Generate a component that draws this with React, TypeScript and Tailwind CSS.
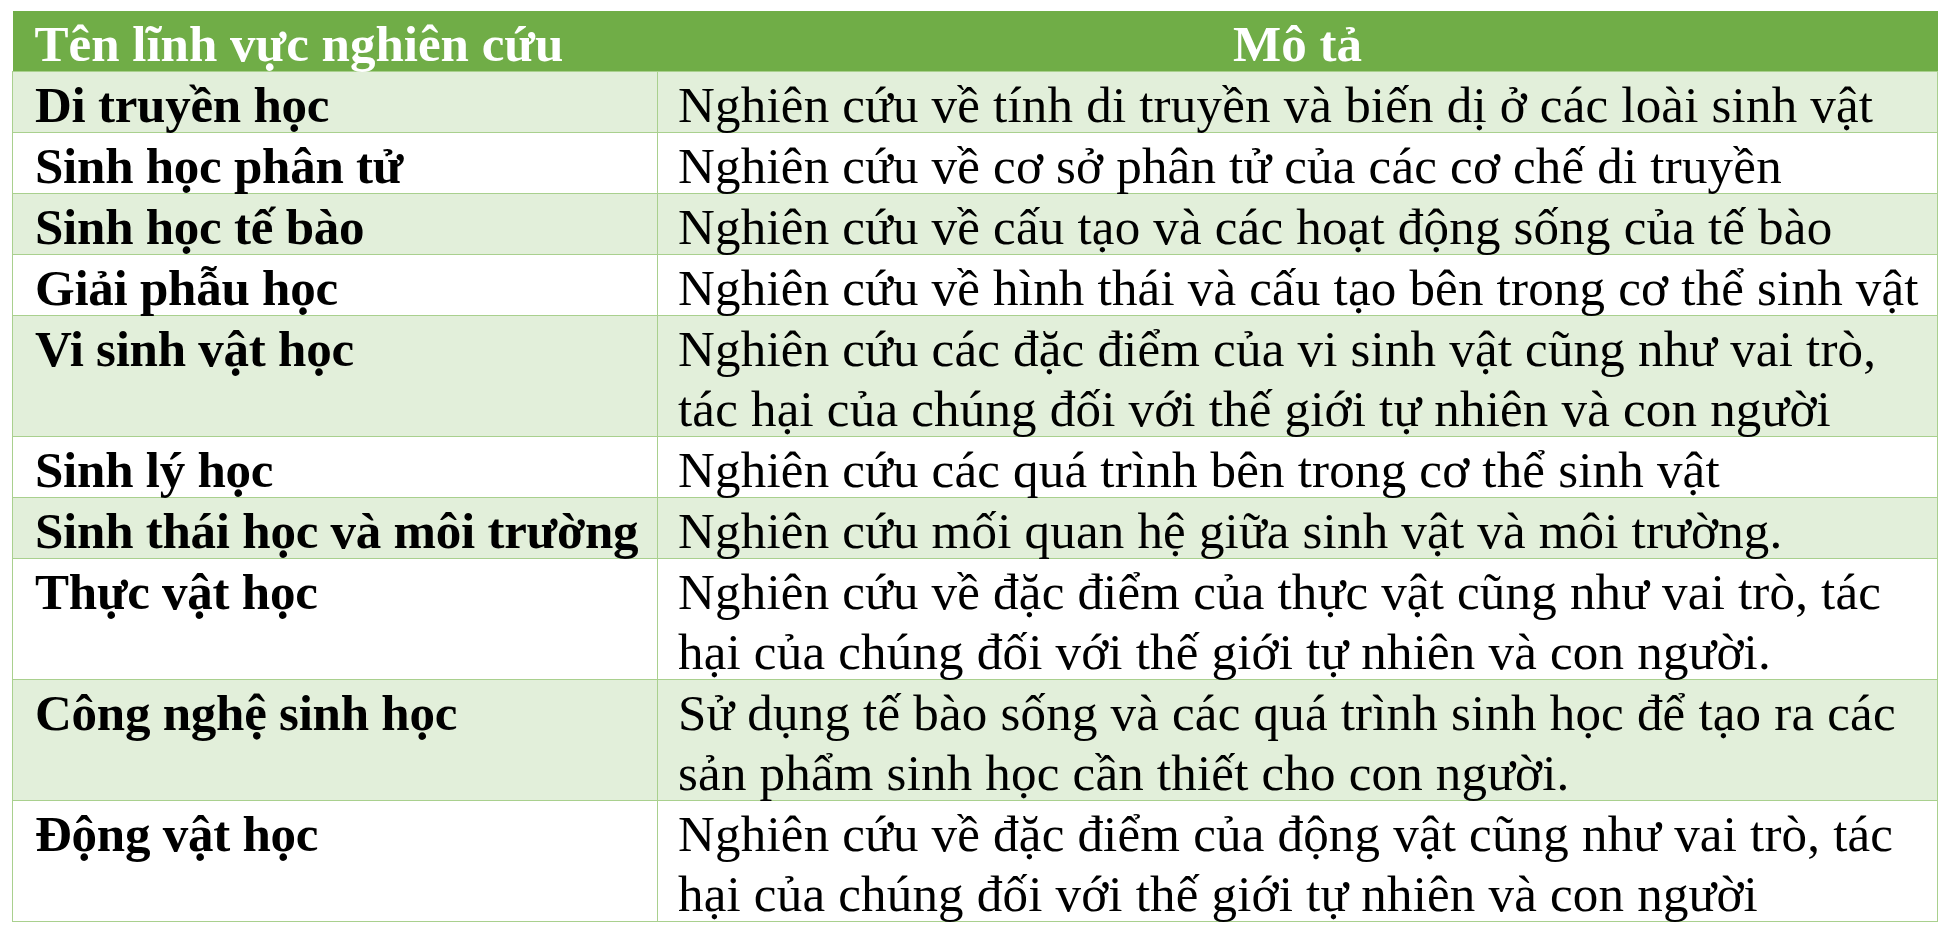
import React from "react";

type Row = { name: string; desc: string[] };

const rows: Row[] = [
  { name: "Di truyền học", desc: ["Nghiên cứu về tính di truyền và biến dị ở các loài sinh vật"] },
  { name: "Sinh học phân tử", desc: ["Nghiên cứu về cơ sở phân tử của các cơ chế di truyền"] },
  { name: "Sinh học tế bào", desc: ["Nghiên cứu về cấu tạo và các hoạt động sống của tế bào"] },
  { name: "Giải phẫu học", desc: ["Nghiên cứu về hình thái và cấu tạo bên trong cơ thể sinh vật"] },
  {
    name: "Vi sinh vật học",
    desc: [
      "Nghiên cứu các đặc điểm của vi sinh vật cũng như vai trò,",
      "tác hại của chúng đối với thế giới tự nhiên và con người",
    ],
  },
  { name: "Sinh lý học", desc: ["Nghiên cứu các quá trình bên trong cơ thể sinh vật"] },
  { name: "Sinh thái học và môi trường", desc: ["Nghiên cứu mối quan hệ giữa sinh vật và môi trường."] },
  {
    name: "Thực vật học",
    desc: [
      "Nghiên cứu về đặc điểm của thực vật cũng như vai trò, tác",
      "hại của chúng đối với thế giới tự nhiên và con người.",
    ],
  },
  {
    name: "Công nghệ sinh học",
    desc: [
      "Sử dụng tế bào sống và các quá trình sinh học để tạo ra các",
      "sản phẩm sinh học cần thiết cho con người.",
    ],
  },
  {
    name: "Động vật học",
    desc: [
      "Nghiên cứu về đặc điểm của động vật cũng như vai trò, tác",
      "hại của chúng đối với thế giới tự nhiên và con người",
    ],
  },
];

export default function App() {
  return (
    <div className="w-[1956px] h-[934px] bg-white pt-[11px] pl-[12px] font-['Liberation_Serif','Times_New_Roman',serif]">
      <table className="border-collapse w-[1926px] table-fixed">
        <colgroup>
          <col className="w-[645px]" />
          <col />
        </colgroup>
        <thead>
          <tr className="bg-[#70ad47] h-[60px]">
            <th className="text-left font-bold text-white text-[51px] leading-[60px] pl-[22px] pr-0 align-top border-b border-[#a9d08e] whitespace-nowrap">
              <span className="inline-block translate-y-[3px]">Tên lĩnh vực nghiên cứu</span>
            </th>
            <th className="text-center font-bold text-white text-[51px] leading-[60px] align-top border-b border-[#a9d08e] whitespace-nowrap">
              <span className="inline-block translate-y-[3px]">Mô tả</span>
            </th>
          </tr>
        </thead>
        <tbody>
          {rows.map((r, i) => (
            <tr key={i} className={i % 2 === 0 ? "bg-[#e2efda]" : "bg-white"}>
              <td className="border border-[#a9d08e] align-top pl-[22px] pr-0 py-0 text-[51px] leading-[60px] font-bold tracking-[-0.25px] text-black whitespace-nowrap">
                <span className="inline-block translate-y-[3px]">{r.name}</span>
              </td>
              <td className="border border-[#a9d08e] align-top pl-[20px] pr-0 py-0 text-[51px] leading-[60px] tracking-[0.2px] text-black whitespace-nowrap">
                {r.desc.map((line, j) => (
                  <div key={j} className="translate-y-[3px]">
                    {line}
                  </div>
                ))}
              </td>
            </tr>
          ))}
        </tbody>
      </table>
    </div>
  );
}
